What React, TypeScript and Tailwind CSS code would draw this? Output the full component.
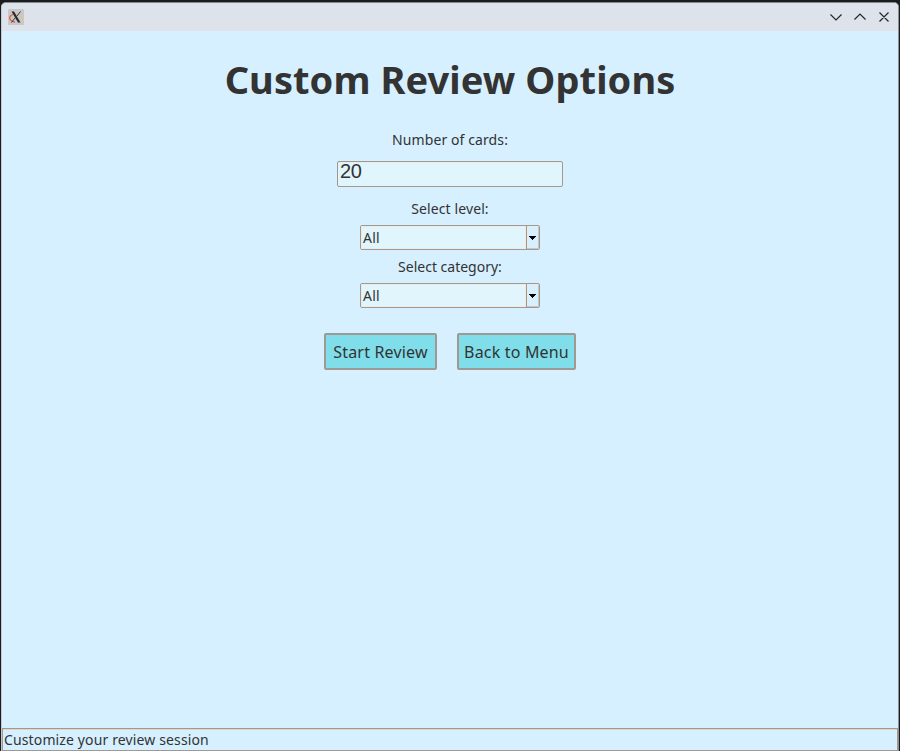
function Dropdown({ value }: { value: string }) {
  return (
    <div className="flex h-[25px] w-[180px] overflow-hidden rounded-[2px] border border-[#9e9a91] bg-[#e0f5fc]">
      <span className="flex-1 border border-[#eeebe7] pl-[1px] text-[14px] leading-[21px] tracking-[0.2px]">{value}</span>
      <span className="flex w-[13px] items-center border-l border-[#9e9a91] bg-[#d6f0ff] pl-[2px] shadow-[inset_-1px_-1px_0_#c9c6c2,inset_1px_1px_0_#eeebe7]">
        <svg width="7" height="4" viewBox="0 0 7 4" shapeRendering="crispEdges">
          <path d="M0 0h7v1H6v1H5v1H4v1H3V3H2V2H1V1H0z" fill="#000" />
        </svg>
      </span>
    </div>
  );
}

function ActionButton({ text, width }: { text: string; width: string }) {
  return (
    <button className={`h-[37px] ${width} rounded-[2px] border-2 border-[#9e9a91] bg-[#80deea] pt-[2px] text-[16px] leading-[31px] tracking-[0.18px] whitespace-nowrap`}>
      {text}
    </button>
  );
}

export default function App() {
  const label = "text-[14px] leading-[20px] tracking-[0.1px]";
  return (
    <div className="h-[751px] w-[900px] overflow-hidden bg-[#1b1c1e] px-px pt-[2px] font-['Noto_Sans',sans-serif] text-[#333333]">
      <div className="flex h-[749px] flex-col rounded-t-[5px] border-x border-t border-l-[#c3cad3] border-r-[#8d9196] border-t-[#85898e] bg-[#d6f0ff]">
        <header className="flex h-[28px] shrink-0 items-center justify-between rounded-t-[4px] bg-[#dde2eb] pr-[8px] pb-px pl-[6px]">
          <svg width="16" height="16" viewBox="0 0 16 16" fill="none">
            <rect width="16" height="16" rx="1" fill="#c6c8ca" />
            <path d="M5 5.500C1.500 6.500 1 9 2.500 11C3.500 12.500 5 13 7 13" stroke="#f05a28" strokeWidth="1.300" />
            <path d="M10 5C14 6 15.500 8 14 11C13 12.500 11 13 9.500 13" stroke="#e8c490" strokeWidth="1.200" />
            <path d="M3.500 2.500h2.500l6.500 11H10z" fill="#26282a" />
            <path d="M12.500 2.500L9 7M7 9L3.500 13.500" stroke="#36383a" strokeWidth="1" />
          </svg>
          <svg width="60" height="16" viewBox="0 0 60 16" fill="none" stroke="#232629" strokeWidth="1.150">
            <path d="M.5 5.500L6 11L11.500 5.500M24.500 10.500L30 5L35.500 10.500M49.500 3.500l9 9M58.500 3.500l-9 9" />
          </svg>
        </header>
        <main className="flex flex-1 flex-col items-center">
          <h1 className="mt-[21px] text-[38px] leading-[54px] font-bold tracking-[0.08px]">Custom Review Options</h1>
          <label className={`${label} mt-[24px]`}>Number of cards:</label>
          <div className="mt-[11px] h-[26px] w-[226px] rounded-[2px] border border-[#9e9a91] bg-[#e0f5fc] pl-[2px] font-['Liberation_Sans',sans-serif] text-[20px] leading-[18px] tracking-[-0.4px] shadow-[inset_0_1px_0_#eeebe7]">20</div>
          <label className={`${label} mt-[12px] mb-[6px]`}>Select level:</label>
          <Dropdown value="All" />
          <label className="mt-[7px] mb-[6px] text-[14px] leading-[20px]">Select category:</label>
          <Dropdown value="All" />
          <div className="mt-[25px] flex gap-[20px]">
            <ActionButton text="Start Review" width="w-[113px]" />
            <ActionButton text="Back to Menu" width="w-[119px]" />
          </div>
        </main>
        <footer className="h-[23px] shrink-0 border border-[#9e9a91] pl-px text-[14px] leading-[21px] tracking-[0.13px] shadow-[inset_0_1px_0_#ddd5cc]">Customize your review session</footer>
      </div>
    </div>
  );
}
